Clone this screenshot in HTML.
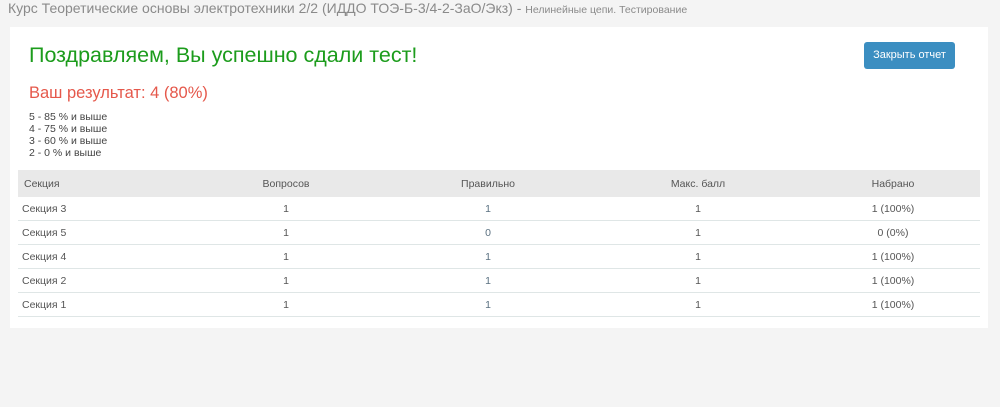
<!DOCTYPE html>
<html><head><meta charset="utf-8"><style>
body{margin:0;background:#f4f4f4;font-family:"Liberation Sans",sans-serif;width:1000px;height:407px;overflow:hidden;position:relative}
.top{position:absolute;left:8px;top:0;font-size:14px;color:#8a8a8a;white-space:nowrap}
.top small{font-size:10.5px}
.card{position:absolute;left:10px;top:27px;width:978px;height:301px;background:#fff}
h1{position:absolute;left:19px;top:16px;margin:0;font-weight:normal;font-size:21.5px;color:#1c9c1c}
h2{position:absolute;left:19px;top:57px;margin:0;font-weight:normal;font-size:16.5px;color:#e5584b}
.sc{position:absolute;left:19px;top:84px;font-size:10.5px;line-height:12px;color:#444}
.btn{position:absolute;left:854px;top:15px;width:91px;height:27px;background:#3b8ec1;border-radius:3px;color:#fff;font-size:11px;text-align:center;line-height:27px}
table{position:absolute;left:8px;top:143px;width:962px;border-collapse:collapse;font-size:10.5px;color:#555}
th,td{padding:0}
th{background:#e9e9e9;font-weight:normal;height:27px;text-align:center}
td{height:23px;border-bottom:1px solid #dfe6e6;text-align:center}
th:first-child{text-align:left;padding-left:6px}
td:first-child{text-align:left;padding-left:4px}
td.b{color:#5a7080}
</style></head><body>
<div class="top">Курс Теоретические основы электротехники 2/2 (ИДДО ТОЭ-Б-3/4-2-ЗаО/Экз) - <small>Нелинейные цепи. Тестирование</small></div>
<div class="card">
<h1>Поздравляем, Вы успешно сдали тест!</h1>
<h2>Ваш результат: 4 (80%)</h2>
<div class="sc">5 - 85 % и выше<br>4 - 75 % и выше<br>3 - 60 % и выше<br>2 - 0 % и выше</div>
<div class="btn">Закрыть отчет</div>
<table>
<colgroup><col style="width:168px"><col style="width:200px"><col style="width:204px"><col style="width:216px"><col style="width:174px"></colgroup>
<tr><th>Секция</th><th>Вопросов</th><th>Правильно</th><th>Макс. балл</th><th>Набрано</th></tr>
<tr><td>Секция 3</td><td>1</td><td class="b">1</td><td>1</td><td>1 (100%)</td></tr>
<tr><td>Секция 5</td><td>1</td><td class="b">0</td><td>1</td><td>0 (0%)</td></tr>
<tr><td>Секция 4</td><td>1</td><td class="b">1</td><td>1</td><td>1 (100%)</td></tr>
<tr><td>Секция 2</td><td>1</td><td class="b">1</td><td>1</td><td>1 (100%)</td></tr>
<tr><td>Секция 1</td><td>1</td><td class="b">1</td><td>1</td><td>1 (100%)</td></tr>
</table>
</div>
</body></html>
